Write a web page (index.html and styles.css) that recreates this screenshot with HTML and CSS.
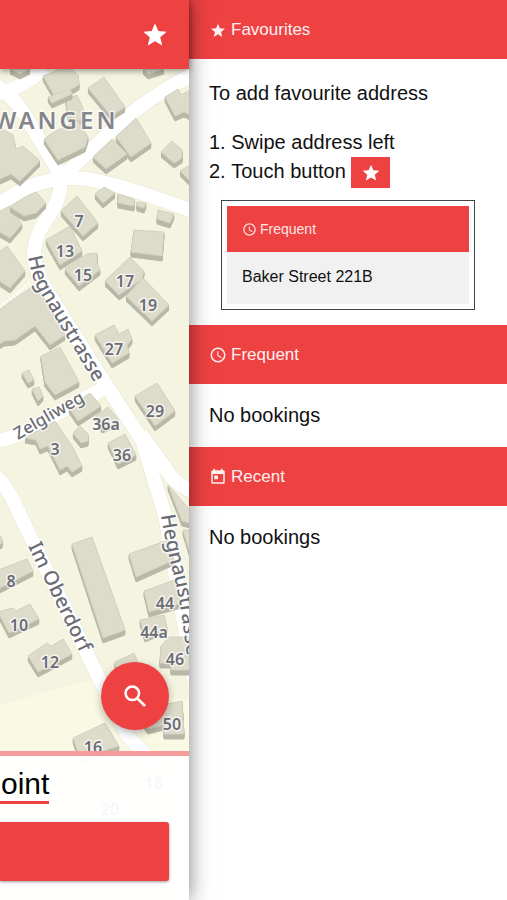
FILE: index.html
```html
<!DOCTYPE html>
<html lang="en">
<head>
  <meta charset="UTF-8" />
  <meta name="viewport" content="width=device-width, initial-scale=1.0"/>
  <title>Favourites</title>
  <link rel="stylesheet" href="styles.css">
</head>
<body>
  <main class="view">
    <svg class="map" viewBox="0 0 189 900" preserveAspectRatio="xMaxYMin slice" role="img" aria-label="Map">
      <defs>
        <path id="hegnau" d="M28 257C31 271 33 282 41 294L106 402"/>
        <path id="hegnau-south" d="M161 515C166 550 176 580 181 610L190 680"/>
        <path id="oberdorf" d="M28 546L94 682"/>
        <path id="zelgli" d="M18 440L92 397"/>
        <g id="roads">
          <path d="M-5 93Q15 93 45 68"/>
          <path d="M-5 85Q12 95 25 115L61 176"/>
          <path d="M62 177L112 130Q150 95 192 75"/>
          <path d="M-5 207Q35 178 70 178Q100 176 192 211"/>
          <path d="M60 178C64 212 34 220 34 256Q35 272 52 299L108 388L142 440L165 515L194 680"/>
          <path d="M141 434L164 466Q174 484 192 491"/>
          <path d="M-5 441Q20 438 45 420L105 388"/>
          <path d="M-5 476Q8 486 20 515L96 672L127 735L155 765"/>
        </g>
      </defs>

      <rect class="ground" width="189" height="900"/>
      <path class="ground-light" d="M0 705L90 680L189 700V900H0Z"/>
      <use class="casing" href="#roads"/>
      <use class="road" href="#roads"/>

      <g class="buildings">
        <path d="M10 69H30L20 74Z"/>
        <path d="M43 76L68 66L78 75L79 85L72 89L54 95Z"/>
        <path d="M66 99L77 95L84 111L80 121L68 117Z"/>
        <path d="M48 97L70 89L72 94L52 103Z"/>
        <path d="M88 88L104 77L125 107L111 116Z"/>
        <path d="M143 69H164L148 74Z"/>
        <path d="M165 97L178 89L181 95L190 90V115L184 112L175 116Z"/>
        <path d="M161 152L172 141L182 150V158L174 163Z"/>
        <path d="M180 171L190 165V181Z"/>
        <path d="M44 139L56 131L78 121L88 137L85 147L58 160Z"/>
        <path d="M-2 127L13 135L16 149L23 146L40 161L20 181L11 174L-2 180Z"/>
        <path d="M116 137L136 118L151 143L131 157Z"/>
        <path d="M93 157L112 139L127 154L106 169Z"/>
        <path d="M95 194L104 187L115 193L103 203Z"/>
        <path d="M118 194L134 199V206L118 203Z"/>
        <path d="M137 202L146 203L144 208L137 206Z"/>
        <path d="M158 210L174 214L170 223L157 219Z"/>
        <path d="M-2 212L10 206L22 224L10 238L-2 231Z"/>
        <path d="M10 207L25 197L36 192L46 203L36 213L24 216Z"/>
        <path d="M61 211L77 196L98 223L83 236Z"/>
        <path d="M134 230L164 232L162 256L131 252Z"/>
        <path d="M46 240L70 226L82 251L60 265Z"/>
        <path d="M65 269L87 254L97 253L97 263L100 270L79 286Z"/>
        <path d="M105 281L130 257L144 271L142 279L119 295Z"/>
        <path d="M126 296L143 278L169 305L152 321Z"/>
        <path d="M-2 253L7 246L25 271L10 288L-2 280Z"/>
        <path d="M-2 310L32 287L42 294L65 335L50 345L35 326L15 340L4 341L-2 345Z"/>
        <path d="M95 335L114 325L119 334L128 329L132 339L127 345L129 353L112 363Z"/>
        <path d="M22 373L29 370L34 380L28 383Z"/>
        <path d="M32 389L39 387L43 396L38 401Z"/>
        <path d="M41 356L60 347L79 382L55 395L45 382Z"/>
        <path d="M69 408L90 393L101 406L78 421Z"/>
        <path d="M135 396L157 383L175 411L155 426Z"/>
        <path d="M73 433L80 426L88 434L88 441L81 443Z"/>
        <path d="M96 416L108 407L118 419L115 423L102 428Z"/>
        <path d="M25 438L55 421L72 446L82 466L72 472L67 466L60 470L48 446L40 449L36 440Z"/>
        <path d="M108 443L125 434L136 455L118 464Z"/>
        <path d="M168 485L190 510V523L182 521Z"/>
        <path d="M-2 534L2 538V543L-2 545Z"/>
        <path d="M72 544L92 537L125 630L103 638Z"/>
        <path d="M129 554L168 540L174 560L136 577Z"/>
        <path d="M183 530H190V553Z"/>
        <path d="M-2 570L27 559L33 571L-2 589Z"/>
        <path d="M-2 612L13 608L16 611L30 604L39 619L9 633Z"/>
        <path d="M28 656L47 643L51 646L63 639L72 654L38 672Z"/>
        <path d="M144 591L174 580L181 603L149 612Z"/>
        <path d="M140 620L164 615L167 628L145 637Z"/>
        <path d="M161 646L169 637H189V670H171V663L160 663Z"/>
        <path d="M115 662L134 653L139 666L117 673Z"/>
        <path d="M140 718L163 705L182 701L184 734L164 734V725L148 729Z"/>
        <path d="M73 738L105 723L119 746L80 758Z"/>
      </g>
      <path class="footpath" d="M0 307L31 282"/>

      <g class="streets">
        <text><textPath href="#hegnau">Hegnaustrasse</textPath></text>
        <text><textPath href="#hegnau-south">Hegnaustrasse</textPath></text>
        <text><textPath href="#oberdorf">Im Oberdorf</textPath></text>
        <text class="minor"><textPath href="#zelgli">Zelgliweg</textPath></text>
      </g>
      <text class="district" x="56" y="129">WANGEN</text>
      <g class="numbers">
        <text x="79" y="227">7</text>
        <text x="65" y="257">13</text>
        <text x="83" y="281">15</text>
        <text x="125" y="287">17</text>
        <text x="148" y="311">19</text>
        <text x="114" y="355">27</text>
        <text x="155" y="417">29</text>
        <text x="106" y="430">36a</text>
        <text x="55" y="455">3</text>
        <text x="122" y="461">36</text>
        <text x="11" y="587">8</text>
        <text x="19" y="631">10</text>
        <text x="50" y="668">12</text>
        <text x="165" y="609">44</text>
        <text x="154" y="638">44a</text>
        <text x="175" y="665">46</text>
        <text x="172" y="730">50</text>
        <text x="93" y="753">16</text>
        <text x="154" y="789">18</text>
        <text x="110" y="815">20</text>
      </g>
    </svg>

    <header class="toolbar">
      <button class="icon-button" type="button" aria-label="Favourites">
        <svg viewBox="0 0 24 24"><path d="M12 17.3l6.2 3.7-1.7-7L22 9.2l-7.2-.6L12 2 9.2 8.6 2 9.2 7.5 14l-1.7 7z"/></svg>
      </button>
    </header>

    <div class="map-area">
      <button class="fab" type="button" aria-label="Search">
        <svg viewBox="0 0 30 30"><circle cx="12.3" cy="12.3" r="6.8"/><path d="M17 17L25 25"/></svg>
      </button>
    </div>

    <section class="pickup">
      <a class="point" href="#">oint</a>
      <button class="order" type="button" aria-label="Order"></button>
    </section>
  </main>

  <aside class="menu">
    <h2 class="bar">
      <svg viewBox="-1 -2 26 26"><path d="M12 17.3l6.2 3.7-1.7-7L22 9.2l-7.2-.6L12 2 9.2 8.6 2 9.2 7.5 14l-1.7 7z"/></svg>
      Favourites
    </h2>
    <div class="help">
      <p>To add favourite address</p>
      <ol>
        <li>Swipe address left</li>
        <li>Touch button
          <span class="star-box"><svg viewBox="0 0 24 24"><path d="M12 17.3l6.2 3.7-1.7-7L22 9.2l-7.2-.6L12 2 9.2 8.6 2 9.2 7.5 14l-1.7 7z"/></svg></span>
        </li>
      </ol>
      <div class="example">
        <h3 class="example-bar">
          <svg viewBox="0 0 24 24"><path d="M12 2a10 10 0 1 0 0 20 10 10 0 0 0 0-20zm0 18a8 8 0 1 1 0-16 8 8 0 0 1 0 16zM12.5 7H11v6l5.2 3.2.8-1.3-4.5-2.7z"/></svg>
          Frequent
        </h3>
        <p class="example-item">Baker Street 221B</p>
      </div>
    </div>

    <h2 class="bar">
      <svg viewBox="0 0 24 24"><path d="M12 2a10 10 0 1 0 0 20 10 10 0 0 0 0-20zm0 18a8 8 0 1 1 0-16 8 8 0 0 1 0 16zM12.5 7H11v6l5.2 3.2.8-1.3-4.5-2.7z"/></svg>
      Frequent
    </h2>
    <p class="empty">No bookings</p>

    <h2 class="bar">
      <svg viewBox="0 0 24 24"><path d="M19 3h-1V1h-2v2H8V1H6v2H5a2 2 0 0 0-2 2v14a2 2 0 0 0 2 2h14a2 2 0 0 0 2-2V5a2 2 0 0 0-2-2zm0 16H5V8h14zM7 10h5v5H7z"/></svg>
      Recent
    </h2>
    <p class="empty">No bookings</p>
  </aside>
</body>
</html>
```

FILE: styles.css
```css
* {
  box-sizing: border-box;
}
body {
  font-family: "Liberation Sans", Arial, sans-serif;
  margin: 0;
  min-height: 100vh;
  display: grid;
  grid-template-columns: 1fr 318px;
  background: #fff;
  color: #111;
  overflow-x: hidden;
}
h2, h3, p, ol {
  margin: 0; padding: 0;
  font-weight: normal;
}
button {
  border: none; padding: 0;
  background: #ee4142;
  cursor: pointer;
}
svg {
  fill: currentColor;
}

/* main view */
.view {
  position: relative;
  z-index: 1;
  display: flex;
  flex-direction: column;
  min-width: 0;
  box-shadow: 0 0 20px rgba(0,0,0,0.5);
}
.toolbar {
  position: relative;
  display: flex;
  justify-content: flex-end;
  align-items: center;
  height: 69px;
  padding: 0 20px;
  background: #ee4142;
  box-shadow: 0 2px 6px rgba(0,0,0,0.4);
}
.icon-button {
  color: #fff;
  height: 28px;
}
.icon-button svg {
  display: block;
  width: 28px; height: 28px;
}
.map-area {
  position: relative;
  flex: 1;
  display: flex;
  justify-content: flex-end;
  align-items: flex-end;
  padding: 21px 20px;
}
.fab {
  display: flex;
  justify-content: center;
  align-items: center;
  width: 68px; height: 68px;
  border-radius: 50%;
  color: #fff;
  box-shadow: 0 3px 8px rgba(0,0,0,0.3);
}
.fab svg {
  width: 30px; height: 30px;
  fill: none;
  stroke: currentColor;
  stroke-width: 2.5;
}
.pickup {
  position: relative;
  padding: 11px 20px 19px 0;
  border-top: 5px solid #f79a9b;
  background: rgba(255,255,255,0.95);
}
.point {
  display: table;
  padding-left: 1px;
  border-bottom: 3px solid #ee4142;
  color: #000;
  font-size: 30px;
  line-height: 34px;
  text-decoration: none;
}
.order {
  display: block;
  width: 100%; height: 59px;
  margin-top: 18px;
  border-radius: 0 3px 3px 0;
  box-shadow: 0 1px 3px rgba(0,0,0,0.4);
}

/* map */
.map {
  position: absolute;
  top: 0; left: 0;
  width: 100%; height: 100%;
}
.ground {
  fill: #f5f4e0;
}
.ground-light {
  fill: #faf9e4;
}
.casing, .road {
  fill: none;
  stroke: #e6e5d6;
  stroke-width: 15px;
  stroke-linejoin: round;
}
.road {
  stroke: #fff;
  stroke-width: 14px;
}
.footpath {
  fill: none;
  stroke: #fff;
  stroke-width: 3px;
  stroke-dasharray: 2 2;
}
.buildings path {
  fill: #dddccb;
  stroke: #d2d1c0;
  stroke-width: 1px;
  filter: drop-shadow(0 1px 0 #b9b8a8) drop-shadow(0 2px 0 #b9b8a8) drop-shadow(0 2px 0 #b9b8a8);
}
.map text {
  font-family: "Noto Sans", "Open Sans", sans-serif;
  fill: #6b6c74;
  stroke: rgba(255,255,255,0.7);
  stroke-width: 3px;
  stroke-linejoin: round;
  paint-order: stroke;
}
.streets {
  font-size: 20px;
  font-weight: 500;
}
.streets .minor {
  font-size: 17px;
}
.numbers {
  font-size: 16px;
  font-weight: 600;
  text-anchor: middle;
}
.map .district {
  fill: #85868b;
  font-size: 24px;
  font-weight: 600;
  letter-spacing: 3px;
  text-anchor: middle;
}

/* side menu */
.bar {
  display: flex;
  align-items: center;
  gap: 4px;
  padding: 20px;
  background: #ee4142;
  color: #fff0f0;
  font-size: 17px;
  line-height: 19px;
}
.bar svg {
  width: 18px; height: 18px;
}
.help {
  padding: 20px 20px 15px;
  font-size: 20px;
  line-height: 29px;
}
.help ol {
  margin-top: 20px;
  list-style-position: inside;
}
.star-box {
  display: inline-flex;
  justify-content: center;
  align-items: center;
  width: 39px; height: 31px;
  vertical-align: middle;
  background: #ee4142;
  color: #fff;
}
.star-box svg {
  width: 20px; height: 20px;
}
.example {
  margin: 12px 12px 0;
  padding: 5px;
  border: 1px solid #444;
}
.example-bar {
  display: flex;
  align-items: center;
  gap: 3px;
  padding: 15px;
  background: #ee4142;
  color: #ffe5e5;
  font-size: 14px;
  line-height: 16px;
}
.example-bar svg {
  width: 15px; height: 15px;
}
.example-item {
  padding: 15px 15px 17px;
  background: #f1f1f1;
  font-size: 16px;
  line-height: 20px;
}
.empty {
  padding: 20px;
  font-size: 20px;
  line-height: 23px;
}
```
